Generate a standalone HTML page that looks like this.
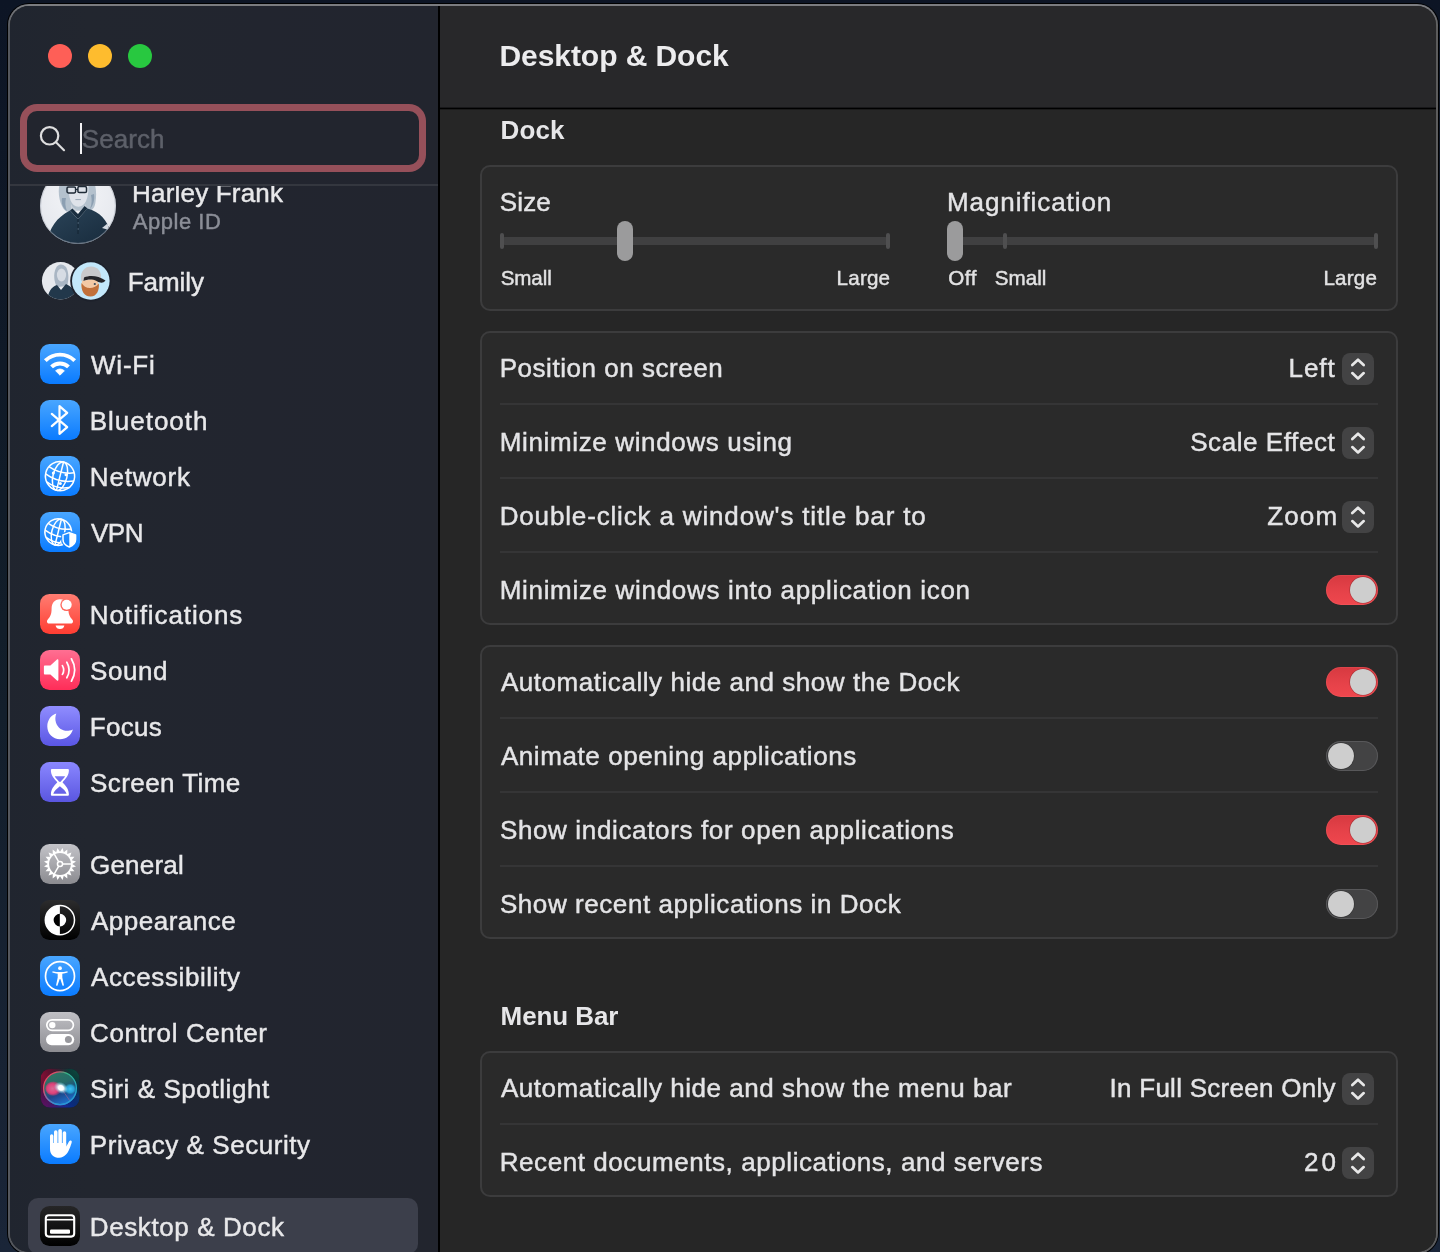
<!DOCTYPE html>
<html lang="en">
<head>
<meta charset="utf-8">
<title>Desktop &amp; Dock</title>
<style>
*{box-sizing:border-box;margin:0;padding:0}
html,body{width:1440px;height:1252px;overflow:hidden}
body{font-family:"Liberation Sans",sans-serif;color:#e4e4e6;position:relative;
  background:linear-gradient(180deg,#0d1525 0%,#121e2a 50%,#1a2538 100%)}
.abs{position:absolute}
#win{position:absolute;left:8px;top:4px;width:1430px;height:1250px;border-radius:21px;background:linear-gradient(180deg,#7b7c80 0,#7b7c80 2px,rgba(123,124,128,0) 24px),linear-gradient(90deg,#54575d 0,#54575d 50%,#5c5c5d 50%,#5c5c5d 100%);box-shadow:0 0 0 1px #000}
#winin{position:absolute;left:2px;top:2px;right:2px;bottom:2px;border-radius:19px;overflow:hidden;background:#272727}
#stage{position:absolute;left:-10px;top:-6px;width:1440px;height:1262px;will-change:transform}
#sidebar{position:absolute;left:0;top:0;width:438px;height:1300px;background:linear-gradient(90deg,#20252f 0%,#22262f 20%,#22252f 60%,#22252e 100%)}
#divider{position:absolute;left:438px;top:0;width:2px;height:1300px;background:#000}
#main{position:absolute;left:440px;top:0;width:1000px;height:1300px;background:#262626}
#header{position:absolute;left:440px;top:0;width:1000px;height:108px;background:#28282a}
#hline{position:absolute;left:440px;top:107px;width:1000px;height:3px;background:linear-gradient(180deg,#18181a 0,#18181a 1px,#000 1px,#000 2px,#1b1b1b 2px,#1b1b1b 3px)}
#sclip{position:absolute;left:0;top:185px;width:438px;height:1100px;overflow:hidden}
#sinner{position:absolute;left:0;top:-185px;width:438px;height:1300px}
.tl{position:absolute;width:24px;height:24px;border-radius:50%;top:44px}
.t{position:absolute;white-space:nowrap;line-height:1}
.card{position:absolute;left:480px;width:918px;border-radius:10px;background:#2a2a2a;border:2px solid #3c3c3d}
.sep{position:absolute;left:500px;width:878px;height:2px;background:#353536}
.step{position:absolute;left:1342px;width:32px;height:32px;border-radius:8px;background:#434344}
.step svg{position:absolute;left:0;top:0}
.tog{position:absolute;left:1326px;width:52px;height:30px;border-radius:15px}
.tog.on{background:linear-gradient(180deg,#d63940 0%,#e64249 55%,#ef474e 100%);box-shadow:inset 0 0 0 1px rgba(255,120,120,.18)}
.tog.off{background:#434344;box-shadow:inset 0 0 0 1px #58585a}
.tog i{position:absolute;top:1.8px;width:26.6px;height:26.4px;border-radius:50%;background:#cecece;box-shadow:0 0 0 0.6px rgba(0,0,0,.25)}
.tog.on i{left:23.7px}
.tog.off i{left:1.7px}

</style>
</head>
<body>
<div id="win"><div id="winin"><div id="stage">
<div id="sidebar"></div>
<div id="main"></div>
<div id="header"></div>
<div id="hline"></div>
<div id="divider"></div>
<div class="tl" style="left:48px;background:#fe5f57"></div>
<div class="tl" style="left:88px;background:#febc2e"></div>
<div class="tl" style="left:128px;background:#28c840"></div>
<!-- sidebar -->
<div id="sclip"><div id="sinner">
<svg class="abs" style="left:40px;top:168px" width="76" height="76" viewBox="0 0 76 76">
<defs><clipPath id="cav"><circle cx="38" cy="38" r="38"/></clipPath>
<linearGradient id="gshirt" x1="0" y1="0" x2="1" y2="1"><stop offset="0" stop-color="#2b4459"/><stop offset="1" stop-color="#172a3b"/></linearGradient>
<radialGradient id="gavbg" cx="0.5" cy="0.35" r="0.75"><stop offset="0" stop-color="#f4f5f8"/><stop offset="1" stop-color="#e2e5eb"/></radialGradient></defs>
<g clip-path="url(#cav)">
<rect width="76" height="76" fill="url(#gavbg)"/>
<path d="M23 8 C17 17 18 30 22 38 C24 43 28 45 31 43 L46 42 C51 45 55 40 55.5 34 C57 25 56 15 51 7 C44 0 29 0 23 8 Z" fill="#b4c1cd"/>
<path d="M22 30 C21 35 23 41 27 43 C25 38 25 34 26 30 Z M54 26 C55 32 53 38 50 41 C52 36 52 31 51 27 Z" fill="#8c9fb2"/>
<path d="M28.4 17 C28 11 48 10 48.4 17 C49 27 46.5 38.8 38.4 38.8 C30.5 38.8 28 27 28.4 17 Z" fill="#dfe3ea"/>
<path d="M31 36 C33 40 36 42 38.4 42 C41 42 44 40 46 36 L46 43 L31 43 Z" fill="#c9d0d9"/>
<rect x="27" y="19" width="8.6" height="6" rx="1.4" fill="none" stroke="#1f2a36" stroke-width="1.5"/>
<rect x="37.9" y="18.6" width="8.6" height="6" rx="1.4" fill="none" stroke="#1f2a36" stroke-width="1.5"/>
<path d="M35.6 21.5 H37.9" stroke="#1f2a36" stroke-width="1.2"/>
<path d="M35.4 31.6 H41" stroke="#9aa6b4" stroke-width="1"/>
<path d="M6 78 C9 60 16 50 30 42.5 L38 51 L47.5 40.5 C60 44 67 52 70.5 64 L72 78 Z" fill="url(#gshirt)"/>
<path d="M30 42.5 L38 51 L47.5 40.5 L44.6 38 L38 46 L32.4 40.4 Z" fill="#1a2e40"/>
<path d="M38 51 V66" stroke="#13222f" stroke-width="0.9"/>
<circle cx="38.2" cy="55" r="0.7" fill="#5d7488"/><circle cx="38.2" cy="61" r="0.7" fill="#5d7488"/>
<path d="M62 60 L67.5 55.5 L69 62 Z" fill="#d3d9e1"/>
</g>
<circle cx="38" cy="38" r="37.4" fill="none" stroke="#aeb5bf" stroke-width="1" opacity="0.55"/>
</svg>
<div class="t" style="left:132.00px;top:179.99px;font-size:26px;letter-spacing:0.199px;color:#e8e8ea;-webkit-text-stroke:0.45px #e8e8ea;">Harley Frank</div>
<div class="t" style="left:132.70px;top:210.88px;font-size:22px;letter-spacing:0.544px;color:#8b8e97;-webkit-text-stroke:0.45px #8b8e97;">Apple ID</div>
<svg class="abs" style="left:40px;top:260px" width="72" height="42" viewBox="0 0 72 42">
<defs><clipPath id="cf1"><circle cx="20.6" cy="20.8" r="18.7"/></clipPath><clipPath id="cf2"><circle cx="50.8" cy="21" r="18.8"/></clipPath></defs>
<g clip-path="url(#cf1)"><rect width="42" height="42" fill="#e6e9ee"/>
<path d="M16 8 C13 14 14 22 17 27 L27 26 C29 20 29 12 26 7 C22 3 18 4 16 8 Z" fill="#a9b6c4"/>
<ellipse cx="21.5" cy="15" rx="4.6" ry="6.4" fill="#d6dce4"/>
<path d="M7 42 C8 32 11 27 17 25 L21 30 L26 24 C33 27 36 32 37 42 Z" fill="#22384b"/></g>
<circle cx="50.8" cy="21" r="20.6" fill="#1d212b"/>
<g clip-path="url(#cf2)"><rect x="30" width="42" height="42" fill="#c3e8fb"/>
<ellipse cx="50" cy="25" rx="8.6" ry="9.8" fill="#f3c9a5"/>
<path d="M41.5 23 C41 31 44 36.5 50.5 36.5 C57 36.5 59.5 30 58.8 23.5 C56 27 53 28 50 28 C46 28 43.5 26 41.5 23 Z" fill="#c1703a"/>
<path d="M41 20 C40 11 45 6.5 51 6.5 C58 6.5 61.5 12 61 18 L41.5 21 Z" fill="#c9c9cb"/>
<path d="M44 17.5 C50 15 58 15.5 65.5 20.5 C63 23.5 60 23 56.5 21 C52 18.8 47 19.5 43.5 21 Z" fill="#26262a"/>
<circle cx="54.8" cy="24" r="1.1" fill="#3a4b5c"/>
</g>
</svg>
<div class="t" style="left:127.80px;top:269.29px;font-size:26px;letter-spacing:-0.071px;color:#e8e8ea;-webkit-text-stroke:0.45px #e8e8ea;">Family</div>
<div class="abs" style="left:28px;top:1198px;width:390px;height:56px;border-radius:10px;background:#3c3f4b"></div>
<svg class="abs" style="left:40px;top:344px" width="40" height="40" viewBox="0 0 40 40"><defs><linearGradient id="gwifi" x1="0" y1="0" x2="0" y2="1"><stop offset="0" stop-color="#49a6ff"/><stop offset="1" stop-color="#0a7bff"/></linearGradient></defs><rect width="40" height="40" rx="9.5" fill="url(#gwifi)"/>
<g fill="none" stroke="#fff" stroke-width="3.9">
<path d="M5.33 16.73 A20.75 20.75 0 0 1 34.67 16.73"/>
<path d="M11.55 22.95 A11.95 11.95 0 0 1 28.45 22.95"/>
</g>
<path d="M20 31.2 L15.6 26.8 A6.3 6.3 0 0 1 24.4 26.8 Z" fill="#fff" stroke="#fff" stroke-width="0.8" stroke-linejoin="round"/></svg>
<div class="t" style="left:91.00px;top:351.69px;font-size:26px;letter-spacing:0.786px;color:#e8e8ea;-webkit-text-stroke:0.45px #e8e8ea;">Wi-Fi</div>
<svg class="abs" style="left:40px;top:400px" width="40" height="40" viewBox="0 0 40 40"><defs><linearGradient id="gbt" x1="0" y1="0" x2="0" y2="1"><stop offset="0" stop-color="#49a6ff"/><stop offset="1" stop-color="#0a7bff"/></linearGradient></defs><rect width="40" height="40" rx="9.5" fill="url(#gbt)"/>
<path d="M11.8 13.9 L27.2 27.1 L19.5 33.8 L19.5 6.2 L27.2 12.9 L11.8 26.1" fill="none" stroke="#fff" stroke-width="2.2" stroke-linecap="round" stroke-linejoin="round"/></svg>
<div class="t" style="left:89.80px;top:407.69px;font-size:26px;letter-spacing:0.974px;color:#e8e8ea;-webkit-text-stroke:0.45px #e8e8ea;">Bluetooth</div>
<svg class="abs" style="left:40px;top:456px" width="40" height="40" viewBox="0 0 40 40"><defs><linearGradient id="gnet" x1="0" y1="0" x2="0" y2="1"><stop offset="0" stop-color="#49a6ff"/><stop offset="1" stop-color="#0a7bff"/></linearGradient></defs><rect width="40" height="40" rx="9.5" fill="url(#gnet)"/>
<g fill="none" stroke="#fff" stroke-width="1.5" transform="rotate(14 20 20.2)">
<circle cx="20" cy="20.2" r="14.6"/>
<ellipse cx="20" cy="20.2" rx="7" ry="14.6"/>
<path d="M20 5.6 V34.8"/>
<path d="M7 13.5 Q20 18.5 33 13.5"/>
<path d="M5.5 21.5 Q20 27.5 34.5 21.5"/>
<path d="M8.5 29 Q20 34 31.5 29"/>
</g>
<g fill="#fff"><circle cx="13.3" cy="17" r="1.5"/><circle cx="26" cy="18.8" r="1.5"/><circle cx="20.3" cy="27.6" r="1.5"/></g></svg>
<div class="t" style="left:89.80px;top:463.69px;font-size:26px;letter-spacing:0.808px;color:#e8e8ea;-webkit-text-stroke:0.45px #e8e8ea;">Network</div>
<svg class="abs" style="left:40px;top:512px" width="40" height="40" viewBox="0 0 40 40"><defs><linearGradient id="gvpn" x1="0" y1="0" x2="0" y2="1"><stop offset="0" stop-color="#49a6ff"/><stop offset="1" stop-color="#0a7bff"/></linearGradient></defs><rect width="40" height="40" rx="9.5" fill="url(#gvpn)"/>
<defs><mask id="mvpn"><rect width="40" height="40" fill="#fff"/><path d="M29.3 18.6 L37.4 21.6 V27.5 C37.4 32 34 35.4 29.3 37 C24.6 35.4 21.2 32 21.2 27.5 V21.6 Z" fill="#000"/></mask></defs>
<g mask="url(#mvpn)"><g fill="none" stroke="#fff" stroke-width="1.5" transform="rotate(14 18.2 20.1)">
<circle cx="18.2" cy="20.1" r="13.3"/>
<ellipse cx="18.2" cy="20.1" rx="6.4" ry="13.3"/>
<path d="M18.2 6.8 V33.4"/>
<path d="M6.4 14 Q18.2 18.5 30 14"/>
<path d="M5 21.3 Q18.2 26.8 31.4 21.3"/>
<path d="M7.8 28.2 Q18.2 32.8 28.6 28.2"/>
</g></g>
<path d="M29.3 20.6 L35.6 22.9 V27.5 C35.6 31 33 33.7 29.3 35 C25.6 33.7 23 31 23 27.5 V22.9 Z" fill="none" stroke="#fff" stroke-width="1.5" stroke-linejoin="round"/>
<path d="M29.3 20.6 L35.6 22.9 V27.5 C35.6 31 33 33.7 29.3 35 Z" fill="#fff"/></svg>
<div class="t" style="left:91.00px;top:519.69px;font-size:26px;letter-spacing:-0.492px;color:#e8e8ea;-webkit-text-stroke:0.45px #e8e8ea;">VPN</div>
<svg class="abs" style="left:40px;top:594px" width="40" height="40" viewBox="0 0 40 40"><defs><linearGradient id="gnot" x1="0" y1="0" x2="0" y2="1"><stop offset="0" stop-color="#ff7d72"/><stop offset="1" stop-color="#ff3d32"/></linearGradient></defs><rect width="40" height="40" rx="9.5" fill="url(#gnot)"/>
<defs><mask id="mnot"><rect width="40" height="40" fill="#fff"/><circle cx="26.7" cy="10.7" r="6.4" fill="#000"/></mask></defs>
<g mask="url(#mnot)" fill="#fff">
<path d="M20 5.2 C14.2 5.2 11.6 9.6 11.6 14.5 C11.6 20 10.4 22.6 7.6 25.8 C6.4 27.2 7 29.6 9.2 29.6 H30.8 C33 29.6 33.6 27.2 32.4 25.8 C29.6 22.6 28.4 20 28.4 14.5 C28.4 9.6 25.8 5.2 20 5.2 Z"/>
</g>
<path d="M15.6 31.4 H24.4 C24 33.6 22.2 35 20 35 C17.8 35 16 33.6 15.6 31.4 Z" fill="#fff"/>
<circle cx="26.7" cy="10.7" r="5" fill="#fff"/></svg>
<div class="t" style="left:89.80px;top:601.69px;font-size:26px;letter-spacing:0.907px;color:#e8e8ea;-webkit-text-stroke:0.45px #e8e8ea;">Notifications</div>
<svg class="abs" style="left:40px;top:650px" width="40" height="40" viewBox="0 0 40 40"><defs><linearGradient id="gsnd" x1="0" y1="0" x2="0" y2="1"><stop offset="0" stop-color="#ff6f92"/><stop offset="1" stop-color="#ff2d58"/></linearGradient></defs><rect width="40" height="40" rx="9.5" fill="url(#gsnd)"/>
<path d="M4.8 15.6 H10.4 L17 9.6 C17.7 9 18.4 9.4 18.4 10.2 V29.8 C18.4 30.6 17.7 31 17 30.4 L10.4 24.4 H4.8 C4.2 24.4 3.9 24 3.9 23.4 V16.6 C3.9 16 4.2 15.6 4.8 15.6 Z" fill="#fff"/>
<g fill="none" stroke="#fff" stroke-width="1.7" stroke-linecap="round">
<path d="M22.4 15.6 Q25 20 22.4 24.4"/>
<path d="M26.8 12.2 Q31.4 20 26.8 27.8"/>
<path d="M31.4 8.8 Q38 20 31.4 31.2"/>
</g></svg>
<div class="t" style="left:90.00px;top:657.69px;font-size:26px;letter-spacing:0.570px;color:#e8e8ea;-webkit-text-stroke:0.45px #e8e8ea;">Sound</div>
<svg class="abs" style="left:40px;top:706px" width="40" height="40" viewBox="0 0 40 40"><defs><linearGradient id="gfoc" x1="0" y1="0" x2="0" y2="1"><stop offset="0" stop-color="#908dff"/><stop offset="1" stop-color="#5a56e4"/></linearGradient></defs><rect width="40" height="40" rx="9.5" fill="url(#gfoc)"/>
<path d="M16.3 7.6 C15.2 10.4 15 13.6 16 16.8 C17.9 22.6 23.6 25.8 29.6 24.6 C30.8 24.3 31.9 23.9 32.9 23.4 C31.2 29.2 26.2 33.2 20 33.2 C12.9 33.2 7.3 27.6 7.3 20.5 C7.3 14.2 11.2 9 16.3 7.6 Z" fill="#fff"/></svg>
<div class="t" style="left:89.80px;top:713.69px;font-size:26px;letter-spacing:0.275px;color:#e8e8ea;-webkit-text-stroke:0.45px #e8e8ea;">Focus</div>
<svg class="abs" style="left:40px;top:762px" width="40" height="40" viewBox="0 0 40 40"><defs><linearGradient id="gst" x1="0" y1="0" x2="0" y2="1"><stop offset="0" stop-color="#8a87ff"/><stop offset="1" stop-color="#5a56e0"/></linearGradient></defs><rect width="40" height="40" rx="9.5" fill="url(#gst)"/>
<defs><mask id="mst"><rect width="40" height="40" fill="#000"/>
<path d="M11.9 7 H27.9 A1 1 0 0 1 28.9 8 C28.9 13.4 26 16.4 22.5 20.3 C26 24.2 28.9 27.2 28.9 32.7 A1 1 0 0 1 27.9 33.7 H11.9 A1 1 0 0 1 10.9 32.7 C10.9 27.2 13.8 24.2 17.3 20.3 C13.8 16.4 10.9 13.4 10.9 8 A1 1 0 0 1 11.9 7 Z" fill="#fff"/>
<path d="M14.7 14.3 H25.1 C24 16.2 22.2 18 20.7 19.7 H19.1 C17.6 18 15.8 16.2 14.7 14.3 Z" fill="#000"/>
<path d="M13.3 31.7 C13.8 29.4 16.6 27 19.9 24.3 C23.2 27 26 29.4 26.5 31.7 Z" fill="#000"/>
</mask></defs>
<rect width="40" height="40" fill="#fff" mask="url(#mst)"/></svg>
<div class="t" style="left:90.00px;top:769.69px;font-size:26px;letter-spacing:0.434px;color:#e8e8ea;-webkit-text-stroke:0.45px #e8e8ea;">Screen Time</div>
<svg class="abs" style="left:40px;top:844px" width="40" height="40" viewBox="0 0 40 40"><defs><linearGradient id="ggen" x1="0" y1="0" x2="0" y2="1"><stop offset="0" stop-color="#c3c3c8"/><stop offset="1" stop-color="#8b8b90"/></linearGradient></defs><rect width="40" height="40" rx="9.5" fill="url(#ggen)"/><defs><mask id="mgear"><rect width="40" height="40" fill="#000"/><path d="M36.00 22.53 L31.70 23.80 L34.43 27.35 L29.95 27.23 L31.46 31.46 L27.23 29.95 L27.35 34.43 L23.80 31.70 L22.53 36.00 L20.00 32.30 L17.47 36.00 L16.20 31.70 L12.65 34.43 L12.77 29.95 L8.54 31.46 L10.05 27.23 L5.57 27.35 L8.30 23.80 L4.00 22.53 L7.70 20.00 L4.00 17.47 L8.30 16.20 L5.57 12.65 L10.05 12.77 L8.54 8.54 L12.77 10.05 L12.65 5.57 L16.20 8.30 L17.47 4.00 L20.00 7.70 L22.53 4.00 L23.80 8.30 L27.35 5.57 L27.23 10.05 L31.46 8.54 L29.95 12.77 L34.43 12.65 L31.70 16.20 L36.00 17.47 L32.30 20.00 Z" fill="#fff"/><circle cx="20.0" cy="20.0" r="10.9" fill="#000"/></mask></defs><rect width="40" height="40" fill="#fff" mask="url(#mgear)"/><g stroke="#fff" stroke-width="1.5" fill="none"><circle cx="20.0" cy="20.0" r="2.55"/><path d="M22.50 20.00 L31.40 20.00"/><path d="M18.75 22.17 L14.30 29.87"/><path d="M18.75 17.83 L14.30 10.13"/></g></svg>
<div class="t" style="left:90.00px;top:851.69px;font-size:26px;letter-spacing:0.213px;color:#e8e8ea;-webkit-text-stroke:0.45px #e8e8ea;">General</div>
<svg class="abs" style="left:40px;top:900px" width="40" height="40" viewBox="0 0 40 40"><defs><linearGradient id="gapp" x1="0" y1="0" x2="0" y2="1"><stop offset="0" stop-color="#2c2c2d"/><stop offset="1" stop-color="#000"/></linearGradient></defs><rect width="40" height="40" rx="9.5" fill="url(#gapp)"/>
<circle cx="19.9" cy="20.1" r="14.6" fill="none" stroke="#fff" stroke-width="1.5"/>
<path d="M19.9 5.5 A14.6 14.6 0 0 0 19.9 34.7 Z" fill="#fff"/>
<path d="M19.9 13.8 A6.3 6.3 0 0 0 19.9 26.4 Z" fill="#000"/>
<path d="M19.9 13.8 A6.3 6.3 0 0 1 19.9 26.4 Z" fill="#fff"/></svg>
<div class="t" style="left:91.00px;top:907.69px;font-size:26px;letter-spacing:0.504px;color:#e8e8ea;-webkit-text-stroke:0.45px #e8e8ea;">Appearance</div>
<svg class="abs" style="left:40px;top:956px" width="40" height="40" viewBox="0 0 40 40"><defs><linearGradient id="gacc" x1="0" y1="0" x2="0" y2="1"><stop offset="0" stop-color="#49a6ff"/><stop offset="1" stop-color="#0a7bff"/></linearGradient></defs><rect width="40" height="40" rx="9.5" fill="url(#gacc)"/>
<circle cx="20" cy="20.2" r="14.5" fill="none" stroke="#fff" stroke-width="1.7"/>
<circle cx="20" cy="12.2" r="1.9" fill="#fff"/>
<path d="M12.6 15.2 C15 15.8 17.4 16.1 20 16.1 C22.6 16.1 25 15.8 27.4 15.2 L27.7 16.6 C25.8 17.2 24 17.6 22.3 17.8 V21.5 L24 29.4 L22.6 29.8 L20.3 23 H19.7 L17.4 29.8 L16 29.4 L17.7 21.5 V17.8 C16 17.6 14.2 17.2 12.3 16.6 Z" fill="#fff"/></svg>
<div class="t" style="left:91.00px;top:963.69px;font-size:26px;letter-spacing:0.617px;color:#e8e8ea;-webkit-text-stroke:0.45px #e8e8ea;">Accessibility</div>
<svg class="abs" style="left:40px;top:1012px" width="40" height="40" viewBox="0 0 40 40"><defs><linearGradient id="gcc" x1="0" y1="0" x2="0" y2="1"><stop offset="0" stop-color="#c0c0c5"/><stop offset="1" stop-color="#8c8c91"/></linearGradient></defs><rect width="40" height="40" rx="9.5" fill="url(#gcc)"/>
<rect x="6.8" y="7.8" width="26.6" height="10.6" rx="5.3" fill="none" stroke="#fff" stroke-width="1.7"/>
<circle cx="12.3" cy="13.1" r="3.2" fill="#fff"/>
<rect x="6" y="22" width="28.2" height="11.2" rx="5.6" fill="#fff"/>
<circle cx="28.4" cy="27.6" r="3.5" fill="#98989d"/></svg>
<div class="t" style="left:90.00px;top:1019.69px;font-size:26px;letter-spacing:0.606px;color:#e8e8ea;-webkit-text-stroke:0.45px #e8e8ea;">Control Center</div>
<svg class="abs" style="left:40px;top:1068px" width="40" height="40" viewBox="0 0 40 40"><defs>
<clipPath id="csq"><rect x="0.8" y="0.8" width="38.6" height="38.8" rx="9.3"/></clipPath>
<clipPath id="corb"><circle cx="20" cy="20.2" r="16.6"/></clipPath>
<radialGradient id="gs1" cx="0" cy="0.2" r="0.75"><stop offset="0" stop-color="#8a0f35"/><stop offset="1" stop-color="#8a0f35" stop-opacity="0"/></radialGradient>
<radialGradient id="gs2" cx="1" cy="0" r="0.8"><stop offset="0" stop-color="#0b4f42"/><stop offset="1" stop-color="#0b4f42" stop-opacity="0"/></radialGradient>
<radialGradient id="gs3" cx="0.05" cy="1" r="0.7"><stop offset="0" stop-color="#651066"/><stop offset="1" stop-color="#651066" stop-opacity="0"/></radialGradient>
<radialGradient id="gs4" cx="0.6" cy="1.05" r="0.6"><stop offset="0" stop-color="#0a2fa8"/><stop offset="1" stop-color="#0a2fa8" stop-opacity="0"/></radialGradient>
<radialGradient id="gs4b" cx="1" cy="0.75" r="0.5"><stop offset="0" stop-color="#0b3560"/><stop offset="1" stop-color="#0b3560" stop-opacity="0"/></radialGradient>
<linearGradient id="gs5" x1="0.2" y1="0" x2="0.6" y2="1"><stop offset="0" stop-color="#2a8068"/><stop offset="0.42" stop-color="#28706c"/><stop offset="0.68" stop-color="#1c4a8e"/><stop offset="1" stop-color="#1f78d6"/></linearGradient>
<radialGradient id="gs6" cx="0.5" cy="0.5" r="0.5"><stop offset="0" stop-color="#fff"/><stop offset="0.4" stop-color="#f4fdff" stop-opacity="0.95"/><stop offset="0.7" stop-color="#b8f2ff" stop-opacity="0.45"/><stop offset="1" stop-color="#7fe0ff" stop-opacity="0"/></radialGradient>
<linearGradient id="gs7" x1="0" y1="0.35" x2="1" y2="0.65"><stop offset="0" stop-color="#e84563"/><stop offset="0.28" stop-color="#d8506a"/><stop offset="0.55" stop-color="#35b583"/><stop offset="1" stop-color="#22a8c8"/></linearGradient>
<linearGradient id="gs7b" x1="0" y1="0" x2="0" y2="1"><stop offset="0.55" stop-color="#2a8fe0" stop-opacity="0"/><stop offset="1" stop-color="#2a8fe0"/></linearGradient>
<radialGradient id="gs8" cx="0.45" cy="0.5" r="0.55"><stop offset="0" stop-color="#d96a94"/><stop offset="0.6" stop-color="#e0417a"/><stop offset="1" stop-color="#e0306a" stop-opacity="0.15"/></radialGradient>
<radialGradient id="gs9" cx="0.5" cy="0.5" r="0.5"><stop offset="0" stop-color="#3fc6f2"/><stop offset="0.65" stop-color="#2aa6e0" stop-opacity="0.9"/><stop offset="1" stop-color="#24b0b0" stop-opacity="0.1"/></radialGradient>
</defs>
<g clip-path="url(#csq)">
<rect width="40" height="40" fill="#0d1524"/>
<rect width="40" height="40" fill="url(#gs2)"/>
<rect width="40" height="40" fill="url(#gs4b)"/>
<rect width="40" height="40" fill="url(#gs4)"/>
<rect width="40" height="40" fill="url(#gs1)"/>
<rect width="40" height="40" fill="url(#gs3)"/>
</g>
<g clip-path="url(#corb)">
<circle cx="20" cy="20.2" r="16.6" fill="url(#gs5)" opacity="0.92"/>
<ellipse cx="13.4" cy="20.6" rx="8" ry="7.2" fill="url(#gs8)"/>
<ellipse cx="30.2" cy="21" rx="6" ry="5.4" fill="url(#gs9)"/>
<path d="M21 20 L30 33" stroke="#e06a8a" stroke-width="1" opacity="0.4" stroke-linecap="round"/>
</g>
<circle cx="20" cy="20.2" r="16.4" fill="none" stroke="url(#gs7)" stroke-width="1.3"/>
<circle cx="20" cy="20.2" r="16.4" fill="none" stroke="url(#gs7b)" stroke-width="1.3"/>
<ellipse cx="21" cy="19.9" rx="7.5" ry="5.6" fill="url(#gs6)" transform="rotate(28 21 19.9)"/>
<circle cx="20.9" cy="19.8" r="2.6" fill="#fff"/></svg>
<div class="t" style="left:90.00px;top:1075.69px;font-size:26px;letter-spacing:0.580px;color:#e8e8ea;-webkit-text-stroke:0.45px #e8e8ea;">Siri &amp; Spotlight</div>
<svg class="abs" style="left:40px;top:1124px" width="40" height="40" viewBox="0 0 40 40"><defs><linearGradient id="gprv" x1="0" y1="0" x2="0" y2="1"><stop offset="0" stop-color="#49a6ff"/><stop offset="1" stop-color="#0a7bff"/></linearGradient></defs><rect width="40" height="40" rx="9.5" fill="url(#gprv)"/>
<g fill="#fff">
<rect x="10" y="10.2" width="3.4" height="13" rx="1.7"/>
<rect x="14" y="6.3" width="3.5" height="16" rx="1.75"/>
<rect x="18.3" y="4.9" width="3.6" height="17" rx="1.8"/>
<rect x="22.7" y="7.2" width="3.5" height="16" rx="1.75"/>
<path d="M10 19 H26.2 V22.5 C27.4 20.6 28.4 18.4 29.2 17.2 C30 16 31.6 16.4 31.8 17.6 C31.9 18.4 31.2 20.2 30.4 22.4 C29.2 25.6 28 28.4 26 30.6 C24.2 32.6 22 33.8 19.2 33.8 C13.8 33.8 10 30.6 10 25 Z"/>
</g></svg>
<div class="t" style="left:89.80px;top:1131.69px;font-size:26px;letter-spacing:0.544px;color:#e8e8ea;-webkit-text-stroke:0.45px #e8e8ea;">Privacy &amp; Security</div>
<svg class="abs" style="left:40px;top:1206px" width="40" height="40" viewBox="0 0 40 40"><defs><linearGradient id="gdock" x1="0" y1="0" x2="0" y2="1"><stop offset="0" stop-color="#262627"/><stop offset="1" stop-color="#000"/></linearGradient></defs><rect width="40" height="40" rx="9.5" fill="url(#gdock)"/>
<rect x="5.8" y="9.2" width="28.4" height="21.4" rx="3" fill="none" stroke="#fff" stroke-width="2.1"/>
<path d="M6 13.7 H34" stroke="#fff" stroke-width="1.6"/>
<rect x="10" y="23.4" width="20" height="4.4" rx="1.2" fill="#fff"/></svg>
<div class="t" style="left:89.80px;top:1213.69px;font-size:26px;letter-spacing:0.600px;color:#e8e8ea;-webkit-text-stroke:0.45px #e8e8ea;">Desktop &amp; Dock</div>
</div></div>
<div class="abs" style="left:10px;top:184px;width:428px;height:2px;background:#34373f"></div>
<div class="abs" style="left:20px;top:104px;width:406px;height:68px;border-radius:17px;background:#96505a"></div>
<div class="abs" style="left:27px;top:111px;width:392px;height:54px;border-radius:10px;background:#22252e"></div>
<svg class="abs" style="left:36px;top:122px" width="32" height="32" viewBox="0 0 32 32" fill="none" stroke="#dededf" stroke-width="2.2" stroke-linecap="round"><circle cx="13.6" cy="13.8" r="8.7"/><path d="M20 20.2 L28 28.2"/></svg>
<div class="abs" style="left:80px;top:123px;width:2px;height:31px;background:#f2f2f4"></div>
<div class="t" style="left:81.80px;top:125.99px;font-size:26px;letter-spacing:0.056px;color:#5d6069;-webkit-text-stroke:0.45px #5d6069;">Search</div>
<!-- main -->
<div class="t" style="left:499.50px;top:41.41px;font-size:30px;letter-spacing:-0.067px;color:#ececee;font-weight:bold;">Desktop &amp; Dock</div>
<div class="t" style="left:500.50px;top:116.99px;font-size:26px;letter-spacing:0.127px;color:#e6e6e8;font-weight:bold;">Dock</div>
<div class="card" style="top:165px;height:146px"></div>
<div class="t" style="left:499.70px;top:189.29px;font-size:26px;letter-spacing:0.161px;color:#e4e4e6;-webkit-text-stroke:0.45px #e4e4e6;">Size</div>
<div class="t" style="left:947.00px;top:189.29px;font-size:26px;letter-spacing:0.922px;color:#e4e4e6;-webkit-text-stroke:0.45px #e4e4e6;">Magnification</div>
<div class="abs" style="left:501px;top:237px;width:388px;height:8px;border-radius:4px;background:#404041"></div><div class="abs" style="left:500px;top:233px;width:4px;height:16px;border-radius:2px;background:#4f4f50"></div><div class="abs" style="left:886px;top:233px;width:4px;height:16px;border-radius:2px;background:#4f4f50"></div><div class="abs" style="left:617px;top:221px;width:16px;height:40px;border-radius:8px;background:#9b9b9c"></div>
<div class="abs" style="left:948px;top:237px;width:429px;height:8px;border-radius:4px;background:#404041"></div><div class="abs" style="left:1003px;top:233px;width:4px;height:16px;border-radius:2px;background:#4f4f50"></div><div class="abs" style="left:1374px;top:233px;width:4px;height:16px;border-radius:2px;background:#4f4f50"></div><div class="abs" style="left:947px;top:221px;width:16px;height:40px;border-radius:8px;background:#9b9b9c"></div>
<div class="t" style="left:500.70px;top:268.16px;font-size:20.6px;letter-spacing:-0.105px;color:#e2e2e3;-webkit-text-stroke:0.45px #e2e2e3;">Small</div>
<div class="t" style="left:836.60px;top:268.16px;font-size:20.6px;letter-spacing:0.196px;color:#e2e2e3;-webkit-text-stroke:0.45px #e2e2e3;">Large</div>
<div class="t" style="left:948.20px;top:268.16px;font-size:20.6px;letter-spacing:0.566px;color:#e2e2e3;-webkit-text-stroke:0.45px #e2e2e3;">Off</div>
<div class="t" style="left:994.80px;top:268.16px;font-size:20.6px;letter-spacing:-0.005px;color:#e2e2e3;-webkit-text-stroke:0.45px #e2e2e3;">Small</div>
<div class="t" style="left:1323.40px;top:268.16px;font-size:20.6px;letter-spacing:0.221px;color:#e2e2e3;-webkit-text-stroke:0.45px #e2e2e3;">Large</div>
<div class="card" style="top:331px;height:294px"></div>
<div class="t" style="left:499.70px;top:354.99px;font-size:26px;letter-spacing:0.533px;color:#e4e4e6;-webkit-text-stroke:0.45px #e4e4e6;">Position on screen</div>
<div class="t" style="left:1288.50px;top:354.99px;font-size:26px;letter-spacing:0.952px;color:#e4e4e6;-webkit-text-stroke:0.45px #e4e4e6;">Left</div>
<div class="step" style="top:353px"><svg width="32" height="32" viewBox="0 0 32 32" fill="none" stroke="#e8e8e8" stroke-width="2.7" stroke-linecap="round" stroke-linejoin="round"><path d="M10.3 12 L16 6.7 L21.7 12"/><path d="M10.3 20.1 L16 25.4 L21.7 20.1"/></svg></div>
<div class="sep" style="top:403px"></div>
<div class="t" style="left:499.70px;top:428.99px;font-size:26px;letter-spacing:0.642px;color:#e4e4e6;-webkit-text-stroke:0.45px #e4e4e6;">Minimize windows using</div>
<div class="t" style="left:1190.20px;top:428.99px;font-size:26px;letter-spacing:0.569px;color:#e4e4e6;-webkit-text-stroke:0.45px #e4e4e6;">Scale Effect</div>
<div class="step" style="top:427px"><svg width="32" height="32" viewBox="0 0 32 32" fill="none" stroke="#e8e8e8" stroke-width="2.7" stroke-linecap="round" stroke-linejoin="round"><path d="M10.3 12 L16 6.7 L21.7 12"/><path d="M10.3 20.1 L16 25.4 L21.7 20.1"/></svg></div>
<div class="sep" style="top:477px"></div>
<div class="t" style="left:499.70px;top:502.99px;font-size:26px;letter-spacing:0.842px;color:#e4e4e6;-webkit-text-stroke:0.45px #e4e4e6;">Double-click a window's title bar to</div>
<div class="t" style="left:1267.20px;top:502.99px;font-size:26px;letter-spacing:1.166px;color:#e4e4e6;-webkit-text-stroke:0.45px #e4e4e6;">Zoom</div>
<div class="step" style="top:501px"><svg width="32" height="32" viewBox="0 0 32 32" fill="none" stroke="#e8e8e8" stroke-width="2.7" stroke-linecap="round" stroke-linejoin="round"><path d="M10.3 12 L16 6.7 L21.7 12"/><path d="M10.3 20.1 L16 25.4 L21.7 20.1"/></svg></div>
<div class="sep" style="top:551px"></div>
<div class="t" style="left:499.70px;top:576.99px;font-size:26px;letter-spacing:0.683px;color:#e4e4e6;-webkit-text-stroke:0.45px #e4e4e6;">Minimize windows into application icon</div>
<div class="tog on" style="top:575px"><i></i></div>
<div class="card" style="top:645px;height:294px"></div>
<div class="t" style="left:500.90px;top:668.99px;font-size:26px;letter-spacing:0.547px;color:#e4e4e6;-webkit-text-stroke:0.45px #e4e4e6;">Automatically hide and show the Dock</div>
<div class="tog on" style="top:667px"><i></i></div>
<div class="sep" style="top:717px"></div>
<div class="t" style="left:500.90px;top:742.99px;font-size:26px;letter-spacing:0.582px;color:#e4e4e6;-webkit-text-stroke:0.45px #e4e4e6;">Animate opening applications</div>
<div class="tog off" style="top:741px"><i></i></div>
<div class="sep" style="top:791px"></div>
<div class="t" style="left:499.90px;top:816.99px;font-size:26px;letter-spacing:0.644px;color:#e4e4e6;-webkit-text-stroke:0.45px #e4e4e6;">Show indicators for open applications</div>
<div class="tog on" style="top:815px"><i></i></div>
<div class="sep" style="top:865px"></div>
<div class="t" style="left:499.90px;top:890.99px;font-size:26px;letter-spacing:0.575px;color:#e4e4e6;-webkit-text-stroke:0.45px #e4e4e6;">Show recent applications in Dock</div>
<div class="tog off" style="top:889px"><i></i></div>
<div class="t" style="left:500.60px;top:1003.39px;font-size:26px;letter-spacing:-0.092px;color:#e6e6e8;font-weight:bold;">Menu Bar</div>
<div class="card" style="top:1051px;height:146px"></div>
<div class="t" style="left:500.90px;top:1074.99px;font-size:26px;letter-spacing:0.534px;color:#e4e4e6;-webkit-text-stroke:0.45px #e4e4e6;">Automatically hide and show the menu bar</div>
<div class="t" style="left:1109.50px;top:1074.99px;font-size:26px;letter-spacing:0.273px;color:#e4e4e6;-webkit-text-stroke:0.45px #e4e4e6;">In Full Screen Only</div>
<div class="step" style="top:1073px"><svg width="32" height="32" viewBox="0 0 32 32" fill="none" stroke="#e8e8e8" stroke-width="2.7" stroke-linecap="round" stroke-linejoin="round"><path d="M10.3 12 L16 6.7 L21.7 12"/><path d="M10.3 20.1 L16 25.4 L21.7 20.1"/></svg></div>
<div class="sep" style="top:1123px"></div>
<div class="t" style="left:499.70px;top:1148.99px;font-size:26px;letter-spacing:0.571px;color:#e4e4e6;-webkit-text-stroke:0.45px #e4e4e6;">Recent documents, applications, and servers</div>
<div class="t" style="left:1304.00px;top:1148.99px;font-size:26px;letter-spacing:3.040px;color:#e4e4e6;-webkit-text-stroke:0.45px #e4e4e6;">20</div>
<div class="step" style="top:1147px"><svg width="32" height="32" viewBox="0 0 32 32" fill="none" stroke="#e8e8e8" stroke-width="2.7" stroke-linecap="round" stroke-linejoin="round"><path d="M10.3 12 L16 6.7 L21.7 12"/><path d="M10.3 20.1 L16 25.4 L21.7 20.1"/></svg></div>
</div></div></div>
</body>
</html>
